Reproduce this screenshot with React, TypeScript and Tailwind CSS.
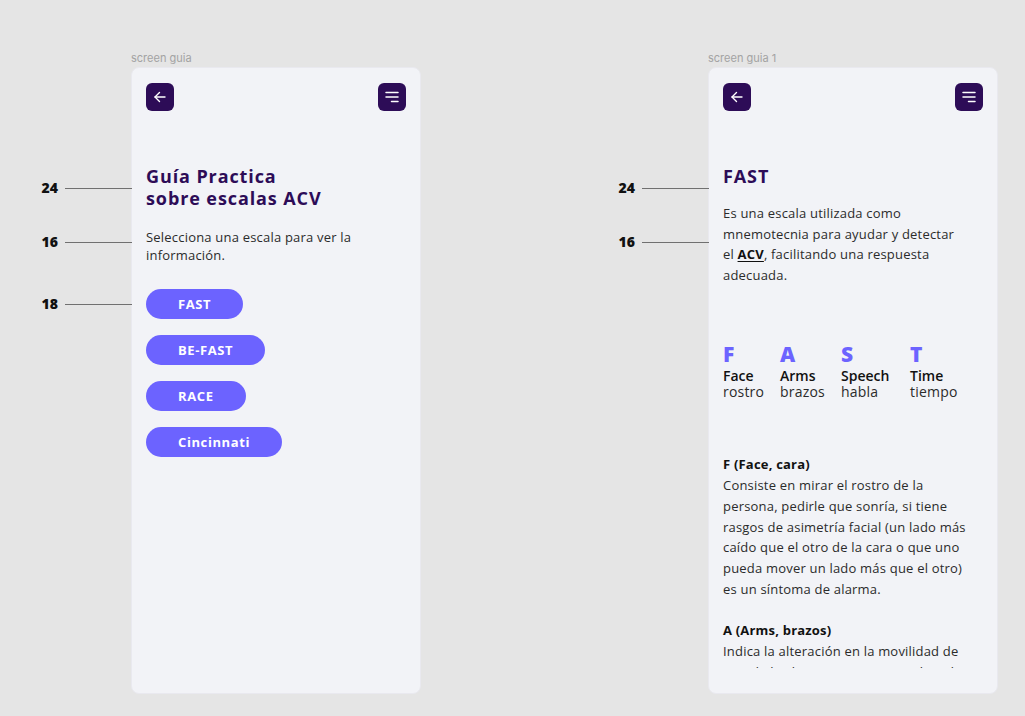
import React from "react";

const font = { fontFamily: '"Open Sans", "Noto Sans", Arial, sans-serif' };

function Annot({ top, n }: { top: number; n: string }) {
  return (
    <div
      className="absolute right-full flex items-center gap-[7px] -translate-y-1/2"
      style={{ top }}
    >
      <span className="text-[14px] font-extrabold text-[#111] leading-none" style={font}>
        {n}
      </span>
      <span className="block h-px w-[67px] bg-[#707070]" />
    </div>
  );
}

function Header() {
  return (
    <div className="flex items-center justify-between">
      <div className="flex h-[28px] w-[28px] items-center justify-center rounded-[6px] bg-[#2d0c57]">
        <svg width="16" height="16" viewBox="0 0 16 16" fill="none" stroke="white" strokeWidth="1.4" strokeLinecap="round" strokeLinejoin="round">
          <path d="M13 8H3" />
          <path d="M7.5 3.5L3 8l4.5 4.5" />
        </svg>
      </div>
      <div className="flex h-[28px] w-[28px] items-center justify-center rounded-[6px] bg-[#2d0c57]">
        <svg width="28" height="28" viewBox="0 0 28 28" fill="none" stroke="white" strokeWidth="1.5" strokeLinecap="round">
          <path d="M8 9.5h12" />
          <path d="M8 14h12" />
          <path d="M13.5 18.5H20" />
        </svg>
      </div>
    </div>
  );
}

function Frame({ label, children }: { label: string; children: React.ReactNode }) {
  return (
    <div className="flex flex-col">
      <div className="mb-[2px] h-[14px] text-[11px] leading-[14px] text-[#a3a3a3]" style={{ fontFamily: "Inter, sans-serif" }}>
        {label}
      </div>
      <div className="relative h-[627px] w-[290px] rounded-[8px] border border-[#e9e9ef] bg-[#f2f3f7]">
        {children}
      </div>
    </div>
  );
}

const btn = "h-[30px] self-start rounded-full bg-[#6c63ff] px-[32px] text-[13px] font-bold text-white leading-[30px] tracking-[0.6px]";

export default function App() {
  return (
    <div className="flex h-[716px] w-full gap-[287px] bg-[#e5e5e5] pl-[131px] pt-[51px]" style={font}>
      <Frame label="screen guia">
        <Annot top={120} n="24" />
        <Annot top={174} n="16" />
        <Annot top={236} n="18" />
        <div className="flex flex-col px-[14px] pt-[15px]">
          <Header />
          <h1 className="mt-[54px] text-[18px] font-bold leading-[22px] tracking-[0.9px] text-[#2d0c57]">
            Guía Practica
            <br />
            sobre escalas ACV
          </h1>
          <p className="mt-[19px] text-[13px] leading-[18px] tracking-[0.2px] text-[#2b2b2b]">
            Selecciona una escala para ver la
            <br />
            información.
          </p>
          <div className="mt-[25px] flex flex-col gap-[16px]">
            <button className={btn}>FAST</button>
            <button className={btn}>BE-FAST</button>
            <button className={btn}>RACE</button>
            <button className={btn}>Cincinnati</button>
          </div>
        </div>
      </Frame>

      <Frame label="screen guia 1">
        <Annot top={120} n="24" />
        <Annot top={174} n="16" />
        <div className="flex h-[600px] flex-col overflow-hidden px-[14px] pt-[15px]">
          <Header />
          <h1 className="mt-[54px] text-[18px] font-bold leading-[22px] tracking-[0.9px] text-[#2d0c57]">FAST</h1>
          <p className="mt-[16px] text-[13px] leading-[20.7px] tracking-[0.2px] text-[#2b2b2b]">
            Es una escala utilizada como
            <br />
            mnemotecnia para ayudar y detectar
            <br />
            el <span className="font-bold underline underline-offset-2 text-[#111]">ACV</span>, facilitando una respuesta
            <br />
            adecuada.
          </p>
          <div className="mt-[57px] flex">
            {[
              ["F", "Face", "rostro", "w-[57px]"],
              ["A", "Arms", "brazos", "w-[61px]"],
              ["S", "Speech", "habla", "w-[69px]"],
              ["T", "Time", "tiempo", "w-[70px]"],
            ].map(([l, en, es, w]) => (
              <div key={l} className={`flex flex-col ${w}`}>
                <span className="h-[22px] text-[21px] font-extrabold leading-[22px] text-[#6c63ff]">{l}</span>
                <span className="mt-[3px] h-[16px] text-[14px] font-semibold leading-[16px] text-[#111]">{en}</span>
                <span className="h-[16px] text-[14px] leading-[16px] tracking-[0.2px] text-[#2b2b2b]">{es}</span>
              </div>
            ))}
          </div>
          <div className="mt-[54px] text-[13px] leading-[20.9px] tracking-[0.2px] text-[#2b2b2b]">
            <p className="font-bold text-[#111]">F (Face, cara)</p>
            <p>
              Consiste en mirar el rostro de la
              <br />
              persona, pedirle que sonría, si tiene
              <br />
              rasgos de asimetría facial (un lado más
              <br />
              caído que el otro de la cara o que uno
              <br />
              pueda mover un lado más que el otro)
              <br />
              es un síntoma de alarma.
            </p>
            <p className="mt-[20px] font-bold text-[#111]">A (Arms, brazos)</p>
            <p>
              Indica la alteración en la movilidad de
              <br />
              uno de los brazos o piernas, se le pide
              <br />
              que levante ambos brazos.
            </p>
          </div>
        </div>
      </Frame>
    </div>
  );
}
